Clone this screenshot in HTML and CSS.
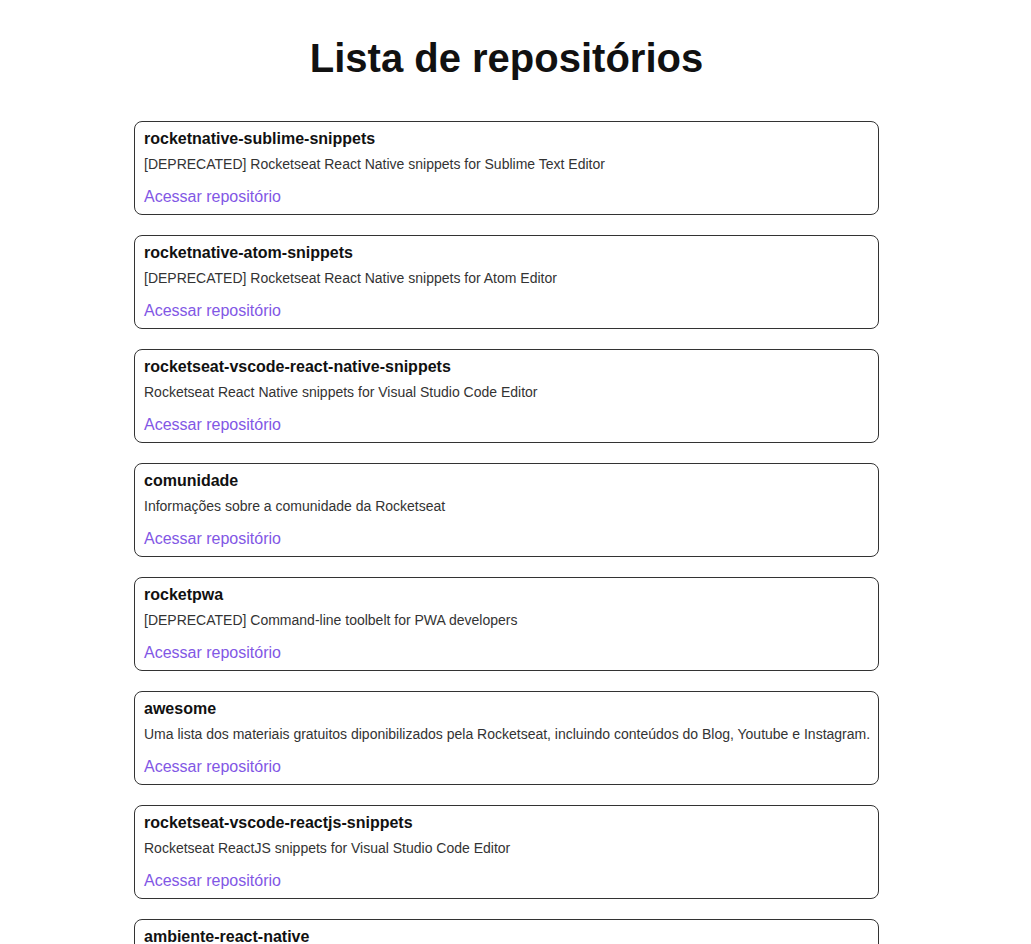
FILE: index.html
```html
<!DOCTYPE html>
<html lang="pt-BR">
<head>
<meta charset="utf-8">
<title>Lista de repositórios</title>
<link rel="stylesheet" href="styles.css">
</head>
<body>
<div class="page">
  <h1 class="page-title">Lista de repositórios</h1>
  <ul class="repo-list">
    <li class="repo-card">
      <strong class="repo-name">rocketnative-sublime-snippets</strong>
      <p class="repo-desc">[DEPRECATED] Rocketseat React Native snippets for Sublime Text Editor</p>
      <a class="repo-link" href="#">Acessar repositório</a>
    </li>
    <li class="repo-card">
      <strong class="repo-name">rocketnative-atom-snippets</strong>
      <p class="repo-desc">[DEPRECATED] Rocketseat React Native snippets for Atom Editor</p>
      <a class="repo-link" href="#">Acessar repositório</a>
    </li>
    <li class="repo-card">
      <strong class="repo-name">rocketseat-vscode-react-native-snippets</strong>
      <p class="repo-desc">Rocketseat React Native snippets for Visual Studio Code Editor</p>
      <a class="repo-link" href="#">Acessar repositório</a>
    </li>
    <li class="repo-card">
      <strong class="repo-name">comunidade</strong>
      <p class="repo-desc">Informações sobre a comunidade da Rocketseat</p>
      <a class="repo-link" href="#">Acessar repositório</a>
    </li>
    <li class="repo-card">
      <strong class="repo-name">rocketpwa</strong>
      <p class="repo-desc">[DEPRECATED] Command-line toolbelt for PWA developers</p>
      <a class="repo-link" href="#">Acessar repositório</a>
    </li>
    <li class="repo-card">
      <strong class="repo-name">awesome</strong>
      <p class="repo-desc">Uma lista dos materiais gratuitos diponibilizados pela Rocketseat, incluindo conteúdos do Blog, Youtube e Instagram.</p>
      <a class="repo-link" href="#">Acessar repositório</a>
    </li>
    <li class="repo-card">
      <strong class="repo-name">rocketseat-vscode-reactjs-snippets</strong>
      <p class="repo-desc">Rocketseat ReactJS snippets for Visual Studio Code Editor</p>
      <a class="repo-link" href="#">Acessar repositório</a>
    </li>
    <li class="repo-card">
      <strong class="repo-name">ambiente-react-native</strong>
      <p class="repo-desc">Configurações do ambiente de desenvolvimento React Native</p>
      <a class="repo-link" href="#">Acessar repositório</a>
    </li>
  </ul>
</div>
</body>
</html>
```
FILE: styles.css
```css
* {
  box-sizing: border-box;
}

html, body {
  margin: 0;
  padding: 0;
  background: #ffffff;
}

body {
  font-family: "Liberation Sans", Arial, sans-serif;
  color: #111111;
  overflow: hidden;
}

.page {
  width: 1013px;
  padding-top: 35px;
  display: flex;
  flex-direction: column;
  align-items: center;
}

.page-title {
  margin: 0;
  font-size: 40px;
  font-weight: 700;
  line-height: 46px;
  color: #111111;
}

.repo-list {
  list-style: none;
  margin: 40px 0 0;
  padding: 0;
  width: 745px;
  display: flex;
  flex-direction: column;
  gap: 20px;
}

.repo-card {
  border: 1px solid #333333;
  border-radius: 8px;
  padding: 8px 6px 8px 9px;
  display: flex;
  flex-direction: column;
  align-items: flex-start;
}

.repo-name {
  font-size: 16px;
  font-weight: 700;
  line-height: 18px;
  color: #111111;
}

.repo-desc {
  margin: 8px 0 15px;
  font-size: 14px;
  line-height: 17px;
  color: #333333;
  white-space: nowrap;
}

.repo-link {
  font-size: 16px;
  line-height: 18px;
  color: #8257e5;
  text-decoration: none;
}
```
